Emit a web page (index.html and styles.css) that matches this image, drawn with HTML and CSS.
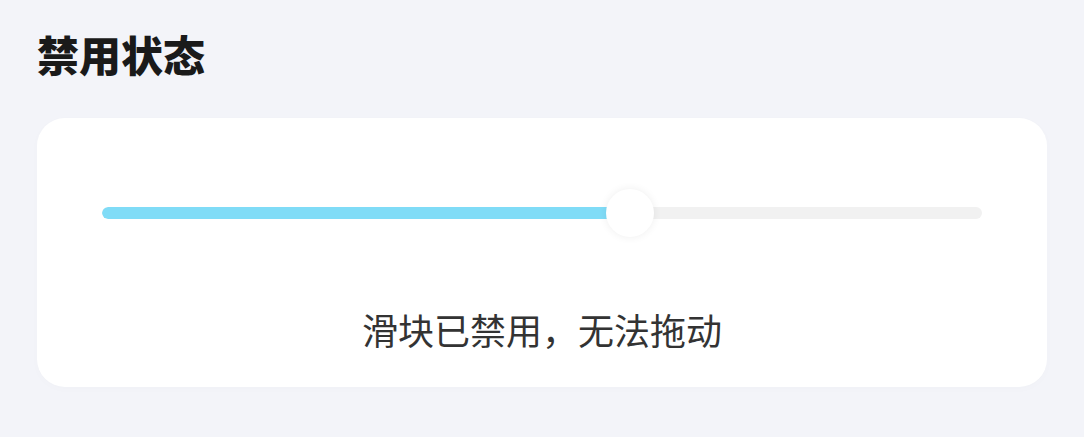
FILE: index.html
```html
<!DOCTYPE html>
<html lang="zh">
<head>
<meta charset="utf-8">
<link rel="stylesheet" href="styles.css">
</head>
<body>
<main class="page">
  <h2 class="title">禁用状态</h2>
  <section class="card">
    <div class="slider">
      <div class="track">
        <div class="fill" style="width: 60%"></div>
      </div>
      <div class="thumb" style="left: 60%"></div>
    </div>
    <p class="hint">滑块已禁用，无法拖动</p>
  </section>
</main>
</body>
</html>
```
FILE: styles.css
```css
* { box-sizing: border-box; }
html, body {
  margin: 0;
  padding: 0;
  background: #f3f4f9;
  font-family: "Noto Sans CJK SC", "Noto Sans", sans-serif;
}
.page {
  padding: 32px 37px 0;
  width: 1084px;
  height: 437px;
}
.title {
  margin: 0;
  font-size: 42px;
  line-height: 44px;
  font-weight: 900;
  color: #1a1a1a;
}
.card {
  margin-top: 42px;
  height: 269px;
  background: #fff;
  border-radius: 28px;
  padding: 71px 65px 0;
  display: flex;
  flex-direction: column;
  box-shadow: 0 2px 10px rgba(0, 0, 0, 0.015);
}
.slider {
  position: relative;
  height: 48px;
  display: flex;
  align-items: center;
}
.track {
  width: 100%;
  height: 12px;
  border-radius: 6px;
  background: #f1f1f1;
  overflow: hidden;
}
.fill {
  height: 100%;
  background: #80dcf7;
  border-radius: 6px;
}
.thumb {
  position: absolute;
  top: 0;
  width: 48px;
  height: 48px;
  margin-left: -24px;
  border-radius: 50%;
  background: #fff;
  box-shadow: 0 0 8px rgba(0, 0, 0, 0.07);
}
.hint {
  margin: 67px 0 0;
  text-align: center;
  font-size: 36px;
  line-height: 50px;
  color: #333;
}
```
